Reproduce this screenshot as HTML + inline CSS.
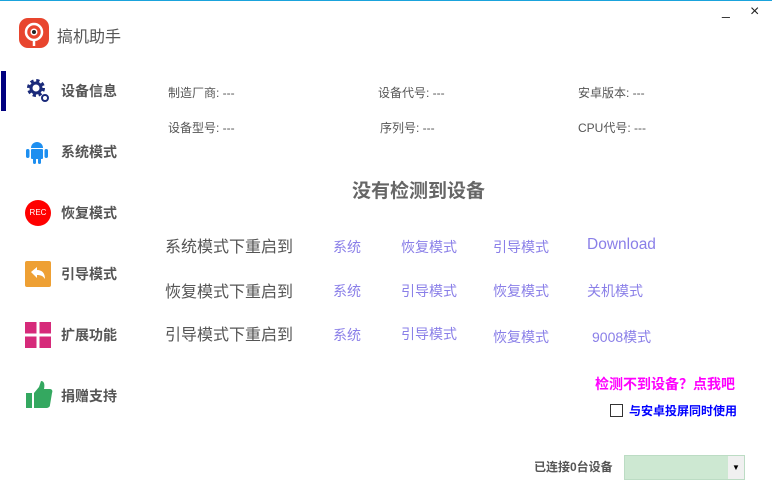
<!DOCTYPE html>
<html><head><meta charset="utf-8"><style>
*{margin:0;padding:0;box-sizing:border-box}
body{width:772px;height:501px;background:#fff;position:relative;overflow:hidden;font-family:"Liberation Sans","Noto Sans CJK SC",sans-serif;color:#555}
.a{position:absolute;white-space:nowrap}
.nav{font-size:14px;font-weight:bold;color:#555;left:61px}
.info{font-size:12px;color:#555}
.rl{font-size:16px;color:#555;left:165px}
.lk{font-size:14px;color:#8a7fe8}
</style></head><body>
<div class="a" style="left:0;top:0;width:772px;height:1px;background:#1aa3dc"></div>
<div class="a" style="left:722px;top:2px;font-size:14px;color:#222">_</div>
<div class="a" style="left:750px;top:3px;font-size:16px;color:#222">×</div>
<svg class="a" style="left:19px;top:18px" width="30" height="30" viewBox="0 0 30 30"><rect width="30" height="30" rx="9" fill="#e8452e"/><circle cx="15" cy="14" r="8" fill="none" stroke="#fff" stroke-width="2.5"/><circle cx="15" cy="14" r="3.5" fill="#fff"/><circle cx="15" cy="14" r="2" fill="#222"/><path d="M15 22v6" stroke="#fff" stroke-width="2.5"/></svg>
<div class="a" style="left:57px;top:23px;font-size:16px;color:#555">搞机助手</div>
<div class="a" style="left:1px;top:71px;width:5px;height:40px;background:#00007f"></div>
<svg class="a" style="left:25px;top:77px" width="26" height="26" viewBox="0 0 26 26"><circle cx="11" cy="11" r="7" fill="none" stroke="#1a2a7a" stroke-width="4" stroke-dasharray="3 2.5"/><circle cx="11" cy="11" r="5" fill="none" stroke="#1a2a7a" stroke-width="3"/><circle cx="20" cy="21" r="3" fill="none" stroke="#1a2a7a" stroke-width="2"/></svg>
<div class="a nav" style="top:81px">设备信息</div>
<svg class="a" style="left:25px;top:139px" width="24" height="26" viewBox="0 0 24 26"><path d="M6 9a6 6 0 0 1 12 0z" fill="#1e8ff0"/><rect x="6" y="10" width="12" height="10" rx="1" fill="#1e8ff0"/><rect x="1" y="10" width="3.5" height="9" rx="1.7" fill="#1e8ff0"/><rect x="19.5" y="10" width="3.5" height="9" rx="1.7" fill="#1e8ff0"/><rect x="8" y="19" width="3" height="6" rx="1.5" fill="#1e8ff0"/><rect x="13" y="19" width="3" height="6" rx="1.5" fill="#1e8ff0"/></svg>
<div class="a nav" style="top:142px">系统模式</div>
<div class="a" style="left:25px;top:200px;width:26px;height:26px;border-radius:50%;background:#f00;color:#fff;font-size:8px;line-height:26px;text-align:center">REC</div>
<div class="a nav" style="top:203px">恢复模式</div>
<svg class="a" style="left:25px;top:261px" width="26" height="26" viewBox="0 0 26 26"><rect width="26" height="26" rx="2" fill="#eea034"/><path d="M6 11l6-5v3c5 0 8 3 8 9-2-3-4-4-8-4v3z" fill="#fff"/></svg>
<div class="a nav" style="top:264px">引导模式</div>
<svg class="a" style="left:25px;top:322px" width="26" height="26" viewBox="0 0 26 26"><rect width="11.5" height="11.5" fill="#d62a7a"/><rect x="14.5" width="11.5" height="11.5" fill="#d62a7a"/><rect y="14.5" width="11.5" height="11.5" fill="#d62a7a"/><rect x="14.5" y="14.5" width="11.5" height="11.5" fill="#d62a7a"/></svg>
<div class="a nav" style="top:325px">扩展功能</div>
<svg class="a" style="left:25px;top:381px" width="28" height="28" viewBox="0 0 28 28"><rect x="1" y="12" width="6" height="15" fill="#34a860"/><path d="M9 12l5-6 2-6c3 0 4 3 3 8h6c2 0 3 2 2 4l-2 12c0 2-2 3-4 3H9z" fill="#34a860"/></svg>
<div class="a nav" style="top:386px">捐赠支持</div>

<div class="a info" style="left:168px;top:84px">制造厂商: ---</div>
<div class="a info" style="left:378px;top:84px">设备代号: ---</div>
<div class="a info" style="left:578px;top:84px">安卓版本: ---</div>
<div class="a info" style="left:168px;top:119px">设备型号: ---</div>
<div class="a info" style="left:380px;top:119px">序列号: ---</div>
<div class="a info" style="left:578px;top:119px">CPU代号: ---</div>

<div class="a" style="left:352px;top:176px;font-size:19px;font-weight:bold;color:#666">没有检测到设备</div>

<div class="a rl" style="top:233px">系统模式下重启到</div>
<div class="a lk" style="left:333px;top:237px">系统</div>
<div class="a lk" style="left:401px;top:237px">恢复模式</div>
<div class="a lk" style="left:493px;top:237px">引导模式</div>
<div class="a lk" style="left:587px;top:236px;font-size:15.5px">Download</div>
<div class="a rl" style="top:278px">恢复模式下重启到</div>
<div class="a lk" style="left:333px;top:281px">系统</div>
<div class="a lk" style="left:401px;top:281px">引导模式</div>
<div class="a lk" style="left:493px;top:281px">恢复模式</div>
<div class="a lk" style="left:587px;top:281px">关机模式</div>
<div class="a rl" style="top:321px">引导模式下重启到</div>
<div class="a lk" style="left:333px;top:325px">系统</div>
<div class="a lk" style="left:401px;top:324px">引导模式</div>
<div class="a lk" style="left:493px;top:327px">恢复模式</div>
<div class="a lk" style="left:592px;top:327px">9008模式</div>

<div class="a" style="left:595px;top:374px;font-size:14px;font-weight:bold;color:#f0f">检测不到设备？点我吧</div>
<div class="a" style="left:610px;top:404px;width:13px;height:13px;border:1px solid #333"></div>
<div class="a" style="left:629px;top:402px;font-size:12px;font-weight:bold;color:#00f">与安卓投屏同时使用</div>
<div class="a" style="left:534px;top:458px;font-size:12px;font-weight:bold;color:#555">已连接0台设备</div>
<div class="a" style="left:624px;top:455px;width:121px;height:25px;background:#cde8d2;border:1px solid #bcdcc4"></div>
<div class="a" style="left:728px;top:456px;width:16px;height:23px;background:#f0f0f0;font-size:8px;text-align:center;line-height:23px;color:#000">▼</div>
</body></html>
